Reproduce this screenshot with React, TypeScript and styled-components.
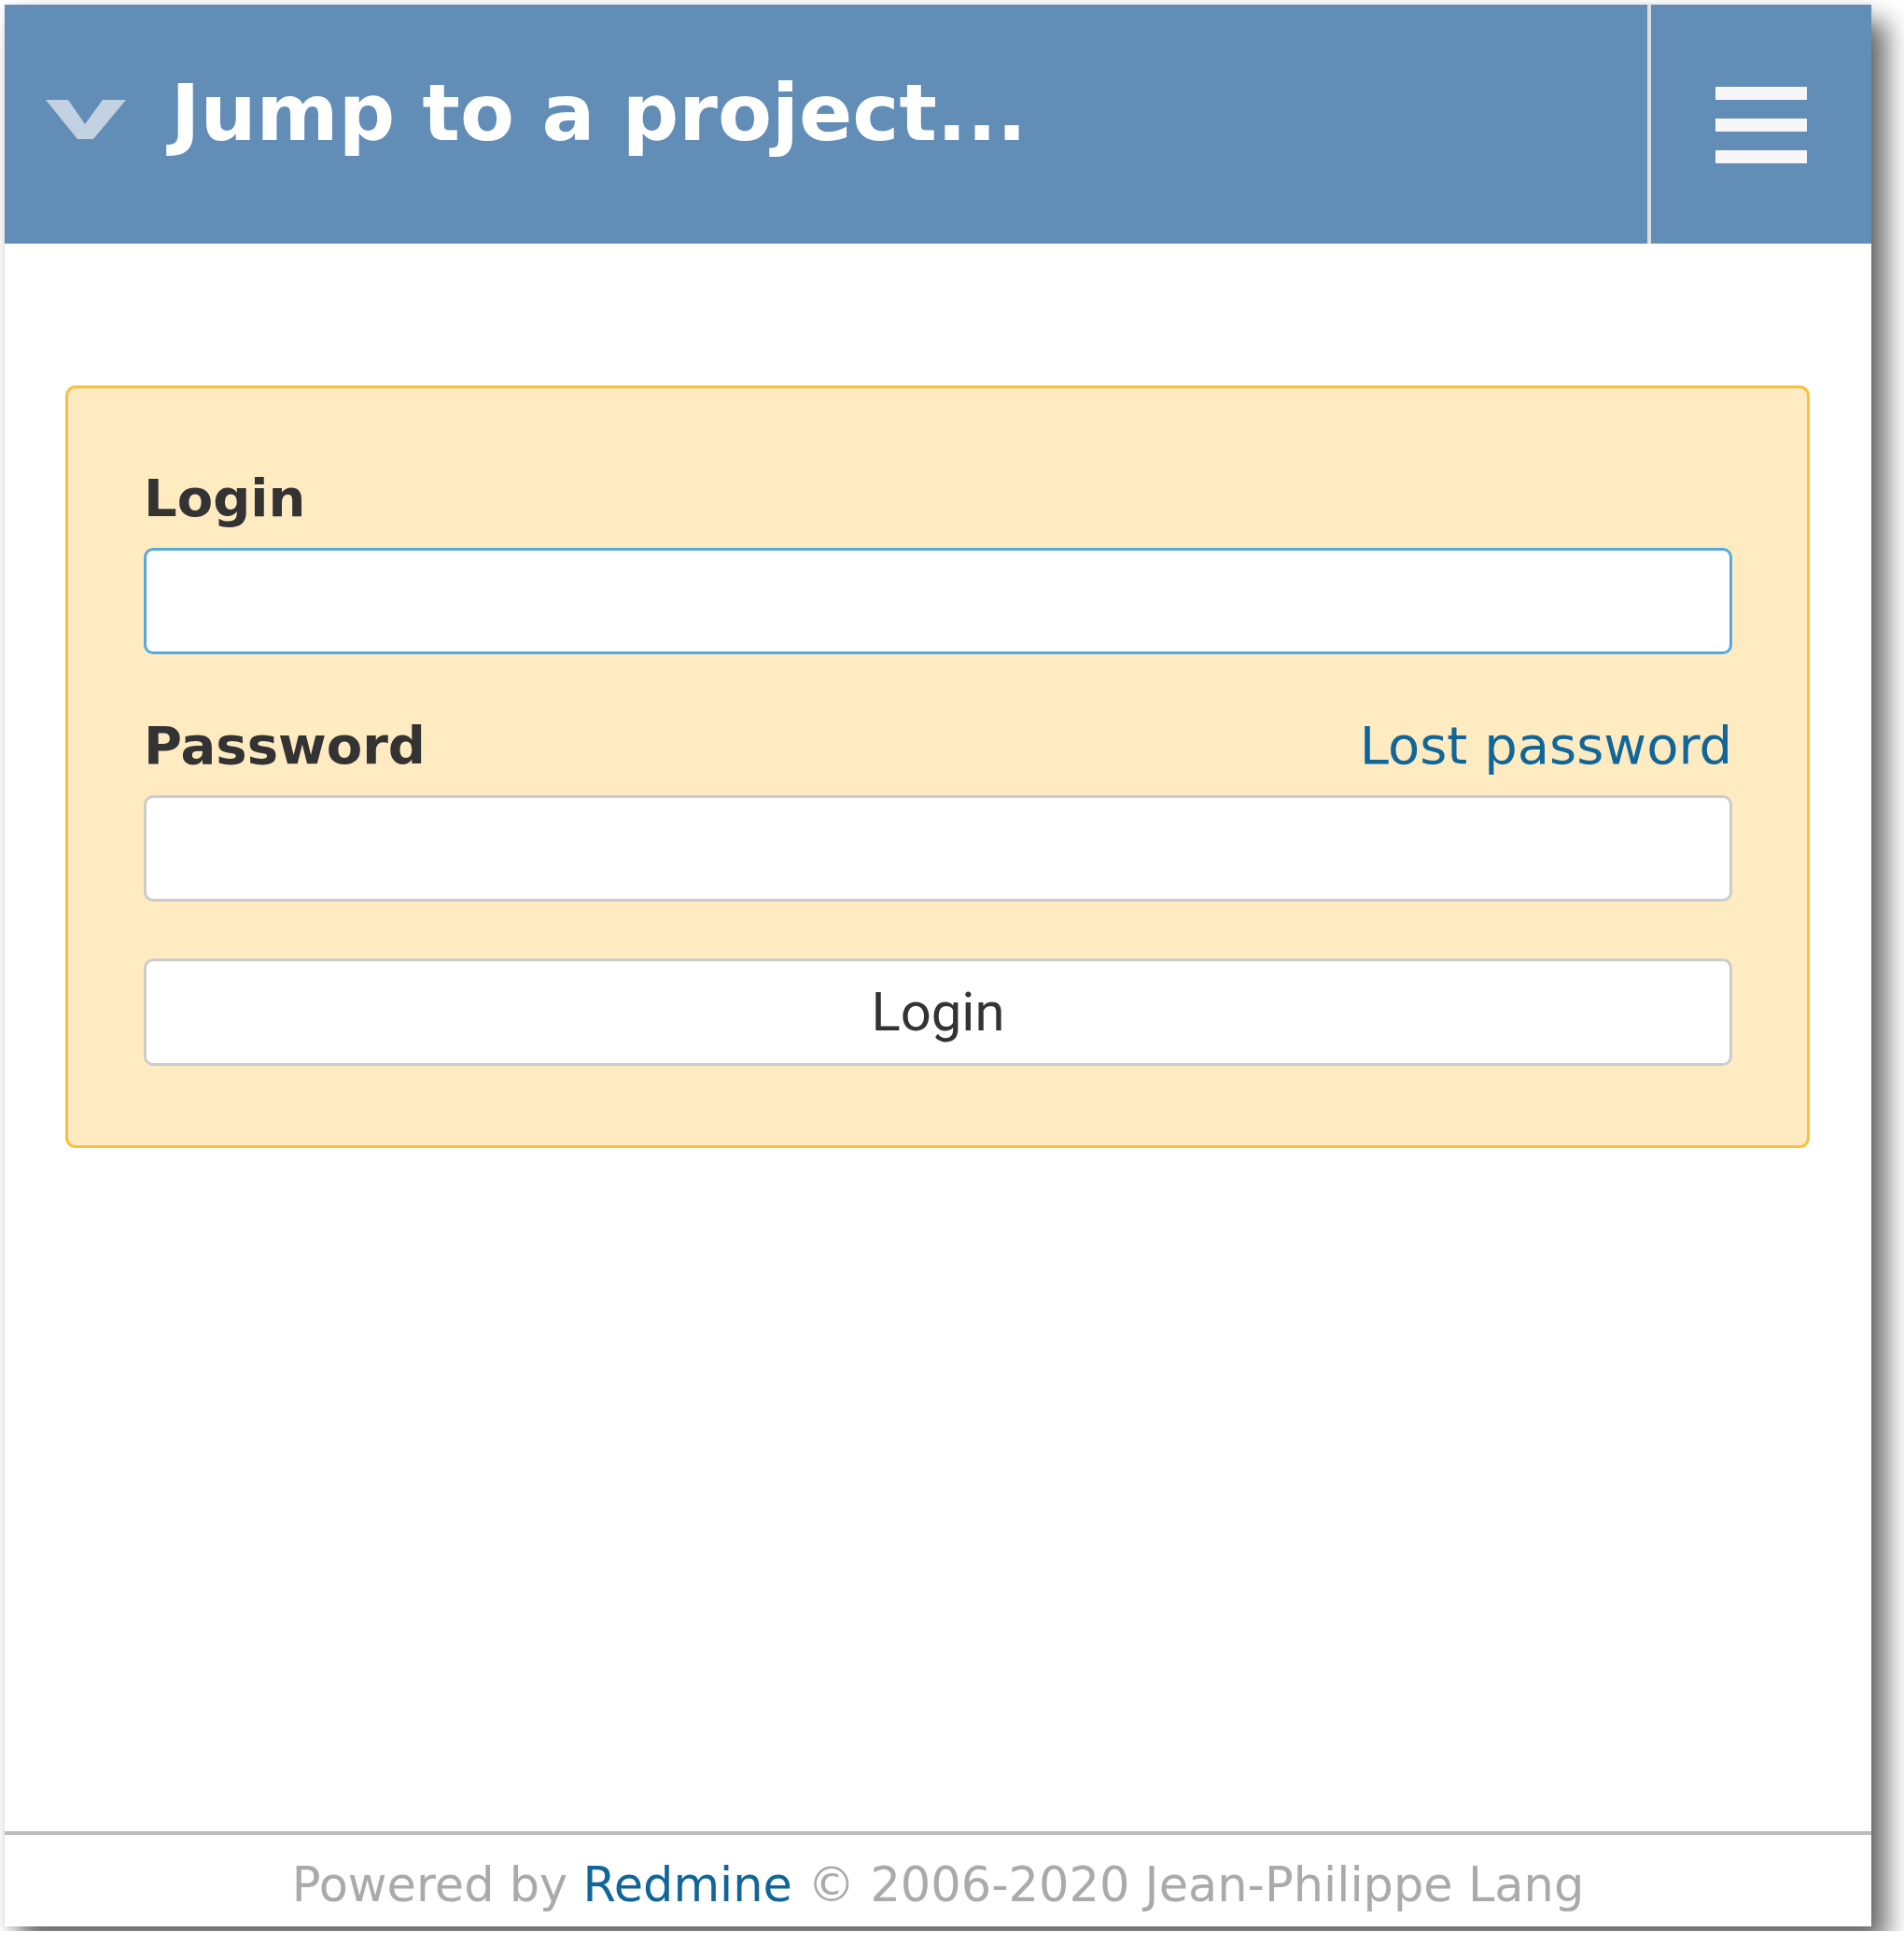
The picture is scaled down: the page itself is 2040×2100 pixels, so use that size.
import React from 'react';
import styled, { createGlobalStyle } from 'styled-components';

const GlobalStyle = createGlobalStyle`
    html, body {
        margin: 0;
        padding: 0;
        background: #ffffff;
    }
    body {
        font-family: "DejaVu Sans", Verdana, sans-serif;
        color: #333333;
    }
`;

// 창 전체
const Window = styled.div`
    margin: 5px;
    width: 2000px;
    height: 2059px;
    display: flex;
    flex-direction: column;
    background: #ffffff;
    box-shadow: 16px 18px 26px rgba(0, 0, 0, 0.6), 0 0 6px rgba(0, 0, 0, 0.08);
`;

const Header = styled.header`
    height: 256px;
    display: flex;
    background: #628db6;
    flex-shrink: 0;
`;

const ProjectJump = styled.div`
    flex: 1;
    display: flex;
    align-items: flex-start;
    padding-left: 44px;
`;

const Chevron = styled.svg`
    margin-top: 102px;
    width: 86px;
    height: 42px;
    flex-shrink: 0;
`;

const Title = styled.div`
    margin-left: 48px;
    margin-top: 66px;
    font-family: "DejaVu Sans", Verdana, sans-serif;
    font-weight: 700;
    font-size: 84.5px;
    line-height: 100px;
    color: #ffffff;
    white-space: nowrap;
`;

const MenuButton = styled.div`
    width: 236px;
    border-left: 4px solid #dddddd;
    display: flex;
    flex-direction: column;
    align-items: center;
    justify-content: center;
    gap: 20px;
    padding-top: 2px;
`;

const MenuBar = styled.span`
    display: block;
    width: 98px;
    height: 14px;
    background: #f7f7f7;
`;

const Main = styled.main`
    flex: 1;
    padding: 152px 66px 0 65px;
`;

const LoginBox = styled.form`
    box-sizing: border-box;
    border: 3px solid #fdbf3b;
    border-radius: 11px;
    background: #ffebc1;
    padding: 85px 80px 85px 81px;
    display: flex;
    flex-direction: column;
`;

const LabelRow = styled.div<{ $gapTop?: number }>`
    display: flex;
    justify-content: space-between;
    align-items: baseline;
    margin-top: ${({ $gapTop }) => $gapTop ?? 0}px;
    margin-bottom: 20px;
    height: 66px;
    line-height: 66px;
`;

const Label = styled.label`
    font-family: "DejaVu Sans", Verdana, sans-serif;
    font-weight: 700;
    font-size: 56px;
    color: #333333;
`;

const LostLink = styled.a`
    font-family: "DejaVu Sans", Verdana, sans-serif;
    font-size: 56px;
    color: #116699;
    text-decoration: none;
`;

const TextInput = styled.div<{ $focused?: boolean }>`
    box-sizing: border-box;
    height: 114px;
    background: #ffffff;
    border: 3px solid ${({ $focused }) => ($focused ? '#55aadd' : '#cccccc')};
    border-radius: 10px;
`;

const SubmitButton = styled.div`
    box-sizing: border-box;
    margin-top: 61px;
    height: 115px;
    background: #ffffff;
    border: 3px solid #cccccc;
    border-radius: 10px;
    display: flex;
    align-items: center;
    justify-content: center;
    font-family: Roboto, "Liberation Sans", sans-serif;
    font-size: 58px;
    color: #333333;
    padding-bottom: 2px;
`;

const Footer = styled.footer`
    flex-shrink: 0;
    border-top: 4px solid #bbbbbb;
    padding: 23px 0 14px;
    text-align: center;
    font-family: "DejaVu Sans", Verdana, sans-serif;
    font-size: 51px;
    line-height: 61px;
    color: #aaaaaa;
    white-space: nowrap;
`;

const FooterLink = styled.a`
    color: #116699;
    text-decoration: none;
`;

const App: React.FC = () => {
    return (
        <>
            <GlobalStyle />
            <Window>
                <Header>
                    <ProjectJump>
                        <Chevron viewBox="0 0 86 42">
                            <polygon points="0,0 24,0 42,26 61,0 86,0 51,42 34,42" fill="#c2d2e2" />
                        </Chevron>
                        <Title>Jump to a project...</Title>
                    </ProjectJump>
                    <MenuButton>
                        <MenuBar />
                        <MenuBar />
                        <MenuBar />
                    </MenuButton>
                </Header>
                <Main>
                    <LoginBox>
                        <LabelRow>
                            <Label>Login</Label>
                        </LabelRow>
                        <TextInput $focused />
                        <LabelRow $gapTop={65}>
                            <Label>Password</Label>
                            <LostLink>Lost password</LostLink>
                        </LabelRow>
                        <TextInput />
                        <SubmitButton>Login</SubmitButton>
                    </LoginBox>
                </Main>
                <Footer>
                    Powered by <FooterLink>Redmine</FooterLink> © 2006-2020 Jean-Philippe Lang
                </Footer>
            </Window>
        </>
    );
};

export default App;
